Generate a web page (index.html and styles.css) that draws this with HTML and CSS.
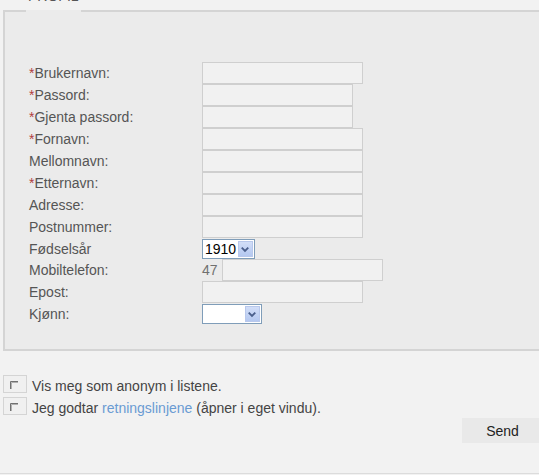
FILE: index.html
```html
<!DOCTYPE html>
<html lang="no">
<head>
<meta charset="utf-8">
<title>Profil</title>
<link rel="stylesheet" href="styles.css">
</head>
<body>
<form class="page">
  <fieldset class="profile">
    <legend class="legend">PROFIL</legend>
    <div class="fields">
      <label class="lbl"><span class="req">*</span>Brukernavn:</label>
      <input class="txt" type="text">
      <label class="lbl"><span class="req">*</span>Passord:</label>
      <input class="txt short" type="password">
      <label class="lbl"><span class="req">*</span>Gjenta passord:</label>
      <input class="txt short" type="password">
      <label class="lbl"><span class="req">*</span>Fornavn:</label>
      <input class="txt" type="text">
      <label class="lbl">Mellomnavn:</label>
      <input class="txt" type="text">
      <label class="lbl"><span class="req">*</span>Etternavn:</label>
      <input class="txt" type="text">
      <label class="lbl">Adresse:</label>
      <input class="txt" type="text">
      <label class="lbl">Postnummer:</label>
      <input class="txt" type="text">
      <label class="lbl">Fødselsår</label>
      <div class="select year">
        <span class="sel-val">1910</span>
        <span class="sel-btn"><svg width="15" height="16" viewBox="0 0 15 16"><path d="M4 6.5 L7.5 10 L11 6.5" fill="none" stroke="#4a5f8c" stroke-width="2"/></svg></span>
      </div>
      <label class="lbl">Mobiltelefon:</label>
      <div class="phone">
        <span class="prefix">47</span>
        <input class="txt" type="text">
      </div>
      <label class="lbl">Epost:</label>
      <input class="txt" type="text">
      <label class="lbl">Kjønn:</label>
      <div class="select gender">
        <span class="sel-val"></span>
        <span class="sel-btn"><svg width="15" height="16" viewBox="0 0 15 16"><path d="M4 6.5 L7.5 10 L11 6.5" fill="none" stroke="#4a5f8c" stroke-width="2"/></svg></span>
      </div>
    </div>
  </fieldset>

  <div class="checks">
    <div class="check-row">
      <span class="box"><svg width="22" height="16" viewBox="0 0 22 16"><path d="M6.5 13 V5.5 H14" fill="none" stroke="#707070" stroke-width="1"/><path d="M7.5 13 V6.5 H14" fill="none" stroke="#b0b0b0" stroke-width="1"/></svg></span>
      <span class="check-text">Vis meg som anonym i listene.</span>
    </div>
    <div class="check-row">
      <span class="box"><svg width="22" height="16" viewBox="0 0 22 16"><path d="M6.5 13 V5.5 H14" fill="none" stroke="#707070" stroke-width="1"/><path d="M7.5 13 V6.5 H14" fill="none" stroke="#b0b0b0" stroke-width="1"/></svg></span>
      <span class="check-text">Jeg godtar <a class="link" href="#">retningslinjene</a> (åpner i eget vindu).</span>
    </div>
  </div>

  <div class="actions">
    <button class="send" type="button">Send</button>
  </div>
  <div class="footer"></div>
</form>
</body>
</html>
```

FILE: styles.css
```css
html, body {
  margin: 0;
  padding: 0;
  overflow: hidden;
  background: #f2f2f2;
}

body {
  font-family: "Liberation Sans", Arial, sans-serif;
  font-size: 14px;
  line-height: 16px;
  color: #4a4a4a;
}

.page {
  margin: 0;
}

.profile {
  margin: -11px -20px 0 3px;
  padding: 29px 0 25px 24px;
  border: 2px solid #d4d4d4;
  background: #ebebeb;
  min-width: 0;
}

.legend {
  margin-left: -3px;
  padding: 0 2px 30px 2px;
  font-size: 14px;
  line-height: 14px;
  color: #555;
}

.fields {
  display: grid;
  grid-template-columns: 173px 1fr;
  align-items: center;
  justify-items: start;
}

.lbl {
  color: #555;
}

.req {
  color: #b04040;
}

.txt {
  width: 161px;
  height: 22px;
  box-sizing: border-box;
  margin: 0;
  padding: 0 3px;
  border: 1px solid #cfcfcf;
  background: #f1f1f1;
  font: inherit;
  color: #333;
  outline: none;
}

.txt.short {
  width: 151px;
}

.select {
  height: 20px;
  margin-top: 1px;
  box-sizing: border-box;
  border: 1px solid #7f9db9;
  background: #ffffff;
  display: flex;
  align-items: center;
  justify-content: space-between;
  padding: 0 1px 0 2px;
  color: #000;
  font-size: 14px;
}

.select.year {
  width: 53px;
}

.select.gender {
  width: 60px;
}

.sel-btn {
  width: 15px;
  height: 16px;
  box-sizing: border-box;
  border: 1px solid #b8c8ec;
  background: linear-gradient(#d2def8, #b4c8f0);
  display: flex;
}

.sel-btn svg {
  display: block;
  margin: -1px 0 0 -1px;
}

.phone {
  display: flex;
  align-items: center;
  gap: 4px;
}

.prefix {
  width: 16px;
  font-size: 14px;
  color: #707070;
}

.checks {
  margin-top: 24px;
}

.check-row {
  display: flex;
  align-items: flex-start;
  height: 22px;
  padding-left: 3px;
}

.box {
  width: 24px;
  height: 18px;
  box-sizing: border-box;
  border: 1px solid #d4d4d4;
  background: #f0f0f0;
  display: flex;
}

.box svg {
  display: block;
}

.check-text {
  margin-left: 5px;
  line-height: 22px;
  color: #444;
}

.link {
  color: #6a9bd3;
  text-decoration: none;
}

.actions {
  display: flex;
  justify-content: flex-end;
  margin-top: -1px;
  margin-right: -4px;
}

.send {
  width: 81px;
  height: 25px;
  border: none;
  margin: 0;
  padding: 0;
  background: #e9e9e9;
  font-family: "Liberation Sans", Arial, sans-serif;
  font-size: 14px;
  color: #222;
}

.footer {
  margin-top: 30px;
  border-top: 1px solid #dcdcdc;
  height: 10px;
}
```
